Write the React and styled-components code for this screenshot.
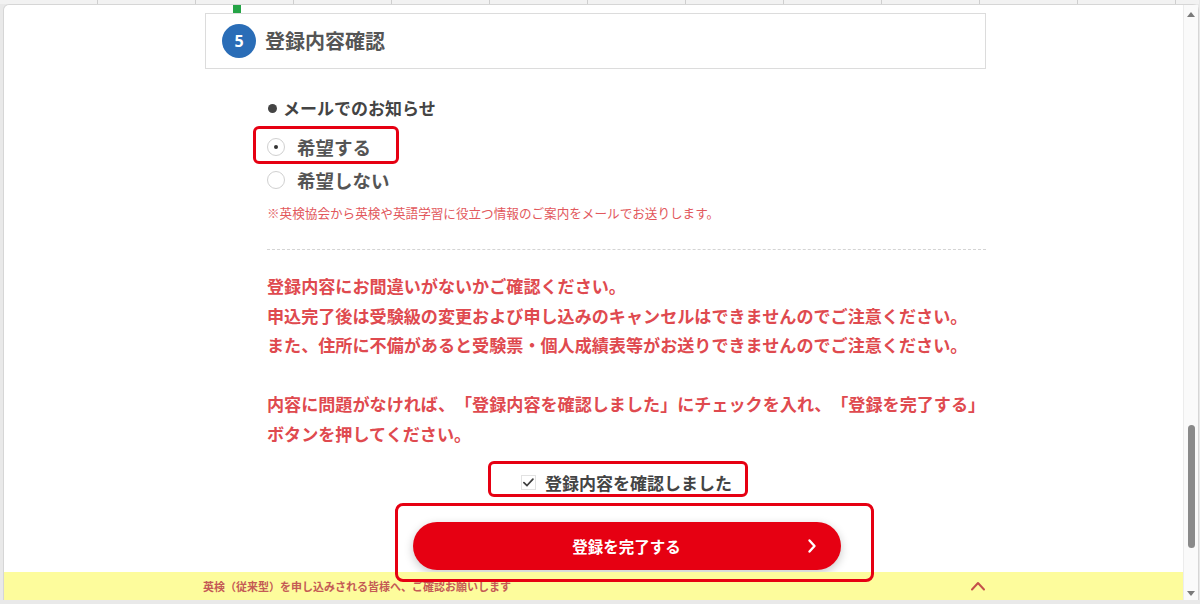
import React from "react"
import styled, { createGlobalStyle } from "styled-components"

const GlobalStyle = createGlobalStyle`
  html, body {
    margin: 0;
    padding: 0;
    background: #e9e9e9;
  }
  body {
    font-family: "Noto Sans CJK JP", "Noto Sans", sans-serif;
    text-spacing-trim: space-all;
  }
`

const notice = [
  [
    "登録内容にお間違いがないかご確認ください。",
    "申込完了後は受験級の変更および申し込みのキャンセルはできませんのでご注意ください。",
    "また、住所に不備があると受験票・個人成績表等がお送りできませんのでご注意ください。",
  ],
  [
    "内容に問題がなければ、「登録内容を確認しました」にチェックを入れ、「登録を完了する」",
    "ボタンを押してください。",
  ],
]

const App = () => (
  <>
    <GlobalStyle />
    <Page>
      <TopStrip>
        {Array.from({ length: 13 }).map((_, i) => (
          <Tab key={i} />
        ))}
      </TopStrip>
      <Window>
        <ContentArea>
          <Main>
            <Column>
              <StepMark />
              <StepHeader>
                <StepBadge>5</StepBadge>
                <StepTitle>登録内容確認</StepTitle>
              </StepHeader>
              <Section>
                <FieldLabel>メールでのお知らせ</FieldLabel>
                <RadioList>
                  <RadioRow>
                    <Highlight style={{ left: -14, top: -4, width: 146, height: 38 }} />
                    <RadioCircle $checked />
                    <RadioText>希望する</RadioText>
                  </RadioRow>
                  <RadioRow>
                    <RadioCircle />
                    <RadioText>希望しない</RadioText>
                  </RadioRow>
                </RadioList>
                <Note>※英検協会から英検や英語学習に役立つ情報のご案内をメールでお送りします。</Note>
                <Divider />
                <Notice>
                  {notice.map((para, i) => (
                    <Para key={i}>
                      {para.map(line => (
                        <div key={line}>{line}</div>
                      ))}
                    </Para>
                  ))}
                </Notice>
                <Center>
                  <CheckRow>
                    <Highlight style={{ left: -33, top: -7, width: 260, height: 36 }} />
                    <CheckBox>
                      <svg width="15" height="15" viewBox="0 0 15 15">
                        <path d="M2.2 7.6 L5.8 11 L12.6 3.6" fill="none" stroke="#3f3f3f" strokeWidth="2" strokeLinecap="round" strokeLinejoin="round" />
                      </svg>
                    </CheckBox>
                    <CheckText>登録内容を確認しました</CheckText>
                  </CheckRow>
                </Center>
                <Center>
                  <SubmitButton>
                    <Highlight $radius={8} style={{ left: -18, top: -19, width: 479, height: 79 }} />
                    <span>登録を完了する</span>
                    <ButtonArrow width="10" height="16" viewBox="0 0 10 16">
                      <path d="M2.5 2.5 L7.5 8 L2.5 13.5" fill="none" stroke="#fff" strokeWidth="2.4" strokeLinecap="round" strokeLinejoin="round" />
                    </ButtonArrow>
                  </SubmitButton>
                </Center>
              </Section>
            </Column>
          </Main>
          <InfoBar>
            <InfoText>英検（従来型）を申し込みされる皆様へ、ご確認お願いします</InfoText>
            <svg width="16" height="10" viewBox="0 0 16 10">
              <path d="M2 8.5 L8 2 L14 8.5" fill="none" stroke="#c4504a" strokeWidth="2" strokeLinecap="round" strokeLinejoin="round" />
            </svg>
          </InfoBar>
        </ContentArea>
        <Scrollbar>
          <ArrowUp />
          <Thumb />
          <ArrowDown />
        </Scrollbar>
      </Window>
    </Page>
  </>
)

const Page = styled.div`
  width: 1200px;
  height: 604px;
  box-sizing: border-box;
  padding: 0 1px 4px 3px;
  display: flex;
  flex-direction: column;
  background: #e9e9e9;
  overflow: hidden;
`

const TopStrip = styled.div`
  height: 4px;
  display: flex;
  margin-left: -3px;
  background: #f2f2f2;
`

const Tab = styled.div`
  flex: 0 0 98px;
  box-sizing: border-box;
  border-right: 1px solid #cfcfcf;
`

const Window = styled.div`
  flex: 1;
  display: flex;
  min-height: 0;
  background: #fff;
  border: 1px solid #d6d6d6;
  border-bottom: none;
  border-radius: 6px 6px 0 0;
`

const ContentArea = styled.div`
  flex: 1;
  display: flex;
  flex-direction: column;
  min-width: 0;
`

const Main = styled.div`
  flex: 1;
  position: relative;
`

const Column = styled.div`
  width: 781px;
  margin-left: 201px;
`

const StepMark = styled.div`
  width: 8px;
  height: 8px;
  margin-left: 28px;
  background: #25a446;
`

const StepHeader = styled.div`
  height: 56px;
  box-sizing: border-box;
  border: 1px solid #dcdcdc;
  display: flex;
  align-items: center;
  padding-left: 16px;
`

const StepBadge = styled.div`
  width: 34px;
  height: 34px;
  border-radius: 50%;
  background: #2a6db7;
  color: #fff;
  font-family: "Noto Sans", sans-serif;
  font-weight: 700;
  font-size: 16px;
  display: flex;
  align-items: center;
  justify-content: center;
`

const StepTitle = styled.h2`
  margin: 0 0 0 9px;
  font-size: 20px;
  font-weight: 700;
  color: #555;
  line-height: 28px;
`

const Section = styled.div`
  padding-left: 62px;
`

const FieldLabel = styled.div`
  margin-top: 28px;
  display: flex;
  align-items: center;
  font-size: 17px;
  font-weight: 700;
  color: #444;
  line-height: 22px;
  &::before {
    content: "";
    width: 9px;
    height: 9px;
    border-radius: 50%;
    background: #444;
    margin: 0 6px 0 1px;
  }
`

const RadioList = styled.div`
  margin-top: 11px;
`

const RadioRow = styled.div`
  position: relative;
  height: 33px;
  display: flex;
  align-items: center;
`

const RadioCircle = styled.span`
  position: relative;
  width: 18px;
  height: 18px;
  box-sizing: border-box;
  border-radius: 50%;
  border: 1px solid #d0d0d0;
  background: #fff;
  &::after {
    content: "";
    display: ${p => (p.$checked ? "block" : "none")};
    position: absolute;
    width: 4px;
    height: 4px;
    border-radius: 50%;
    background: #333;
    left: 6px;
    top: 6px;
  }
`

const RadioText = styled.span`
  margin-left: 12px;
  font-size: 18.5px;
  font-weight: 700;
  color: #555;
`

const Highlight = styled.div`
  position: absolute;
  box-sizing: border-box;
  border: 3px solid #e60012;
  border-radius: ${p => p.$radius || 6}px;
  z-index: 5;
  pointer-events: none;
`

const Note = styled.div`
  margin-top: 9px;
  font-size: 12.6px;
  line-height: 16px;
  color: #e2585c;
`

const Divider = styled.div`
  margin-top: 28px;
  border-top: 1px dashed #d4d4d4;
`

const Notice = styled.div`
  margin-top: 21px;
  font-size: 17.1px;
  font-weight: 700;
  line-height: 29.5px;
  color: #df4a4f;
  white-space: nowrap;
`

const Para = styled.div`
  & + & {
    margin-top: 29.5px;
  }
`

const Center = styled.div`
  display: flex;
  justify-content: center;
`

const CheckRow = styled.label`
  position: relative;
  margin-top: 20px;
  height: 28px;
  display: inline-flex;
  align-items: center;
`

const CheckBox = styled.span`
  width: 15px;
  height: 15px;
  box-sizing: border-box;
  border: 1px solid #e2e2e2;
  display: flex;
  align-items: center;
  justify-content: center;
`

const CheckText = styled.span`
  margin-left: 9px;
  font-size: 17px;
  font-weight: 700;
  color: #444;
`

const SubmitButton = styled.button`
  position: relative;
  margin: 26px 0 0 0;
  width: 428px;
  height: 48px;
  border: none;
  border-radius: 24px;
  background: #e60012;
  box-shadow: 0 3px 10px rgba(0, 0, 0, 0.22);
  color: #fff;
  font-family: inherit;
  font-size: 15.5px;
  font-weight: 700;
  display: flex;
  align-items: center;
  justify-content: center;
  padding: 0;
`

const ButtonArrow = styled.svg`
  position: absolute;
  right: 24px;
  top: 16px;
`

const InfoBar = styled.div`
  position: relative;
  z-index: 1;
  height: 28px;
  flex: 0 0 28px;
  background: #fdfc9c;
  display: flex;
  align-items: center;
  padding-left: 199px;
  padding-right: 197px;
`

const InfoText = styled.span`
  flex: 1;
  font-size: 11px;
  font-weight: 700;
  color: #c45a55;
`

const Scrollbar = styled.div`
  width: 14px;
  flex: 0 0 14px;
  display: flex;
  flex-direction: column;
  align-items: center;
  background: #fafafa;
  border-left: 1px solid #ececec;
`

const ArrowUp = styled.div`
  margin-top: 7px;
  width: 0;
  height: 0;
  border-left: 4px solid transparent;
  border-right: 4px solid transparent;
  border-bottom: 5px solid #7a7a7a;
`

const Thumb = styled.div`
  margin-top: 408px;
  width: 7px;
  height: 123px;
  border-radius: 4px;
  background: #8a8a8a;
`

const ArrowDown = styled.div`
  margin-top: auto;
  margin-bottom: 4px;
  width: 0;
  height: 0;
  border-left: 4px solid transparent;
  border-right: 4px solid transparent;
  border-top: 5px solid #7a7a7a;
`

export default App
